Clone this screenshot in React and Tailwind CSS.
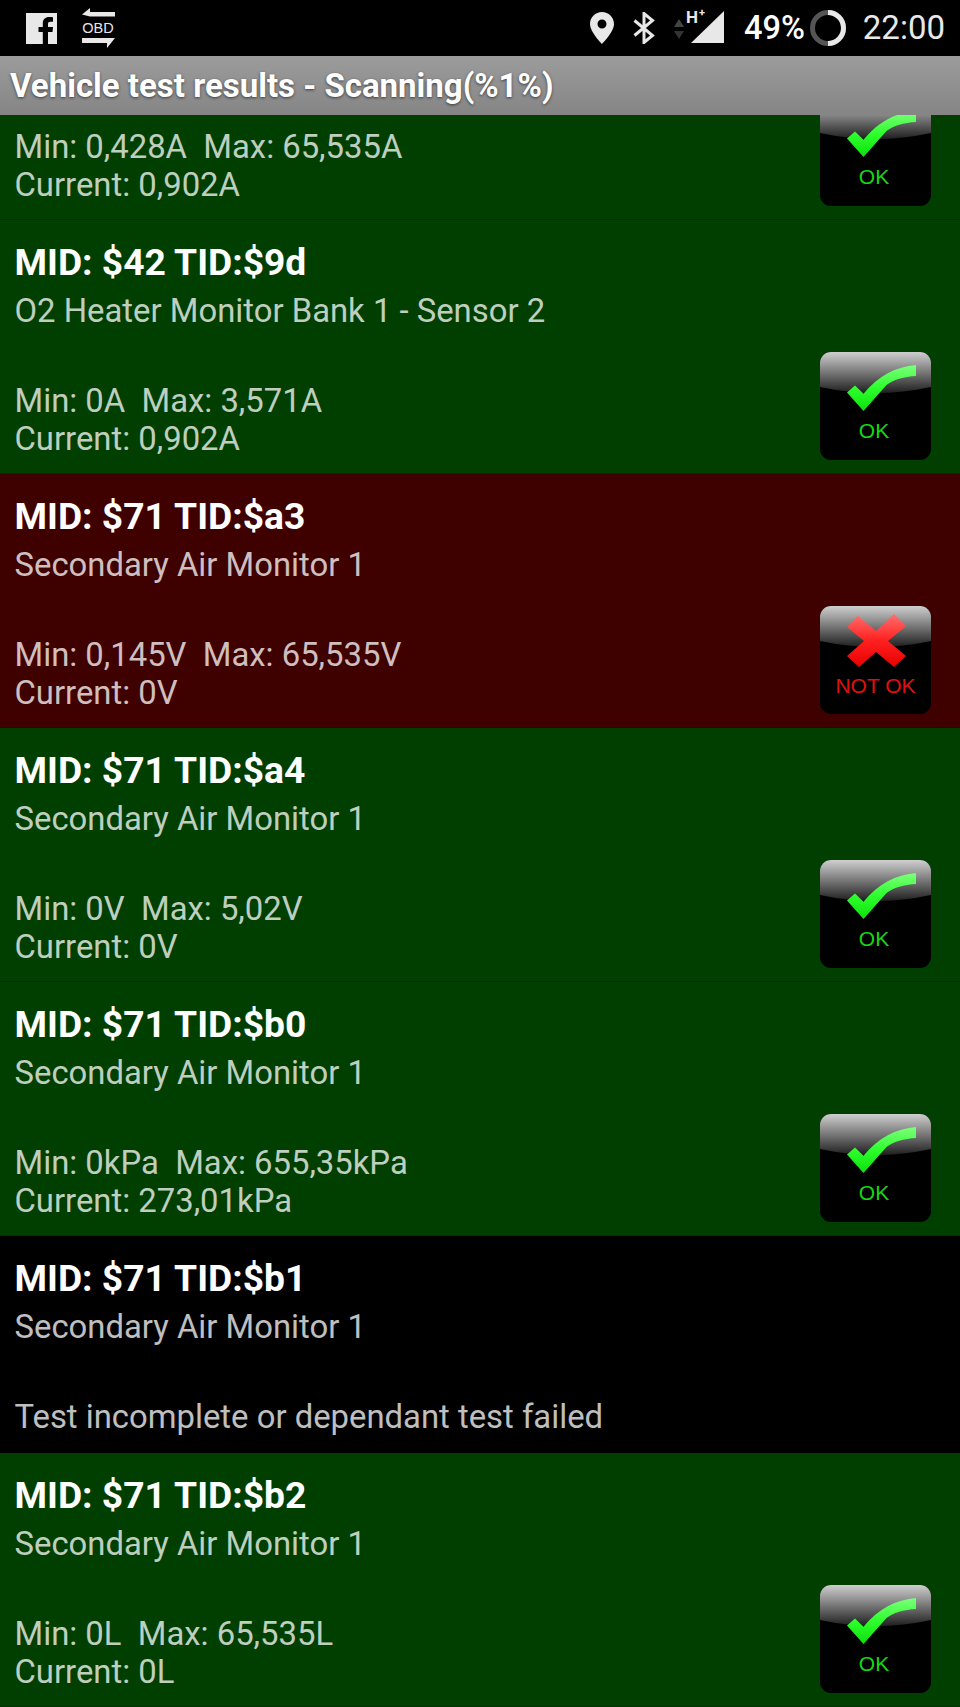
import React from "react";

function StatusLeft() {
  return (
    <div className="flex items-center gap-[24px] pl-[26px]">
      <svg width="31" height="31" viewBox="0 0 31 31">
        <path fill="#e8e8e8" d="M0 0H31V31H22V19H26.500L27 14H22V11C22 9.500 22.700 8.700 24.300 8.700H27V4.200C26 4.100 24.500 4 23.200 4C19.300 4 16.800 6.300 16.800 10.500V14H12.500V19H16.800V31H0Z" />
      </svg>
      <svg width="34" height="40" viewBox="0 0 34 40">
        <path fill="#e8e8e8" d="M1 6.500L9 0V4H34V8.500H9Z" />
        <text x="17" y="24.500" textAnchor="middle" fontSize="14.500" fontFamily="Liberation Sans, sans-serif" fill="#e8e8e8">OBD</text>
        <path fill="#e8e8e8" d="M1 30H34L26 40V35H1Z" />
      </svg>
    </div>
  );
}

function StatusRight() {
  return (
    <div className="flex items-center pr-[15px]">
      <svg width="24" height="32" viewBox="0 0 24 32" className="mr-[19px]">
        <path fill="#e8e8e8" fillRule="evenodd" d="M12 0C5.400 0 0 5.300 0 12C0 20 12 32 12 32S24 20 24 12C24 5.300 18.600 0 12 0ZM12 16.500A4.500 4.500 0 1 1 12 7.500A4.500 4.500 0 0 1 12 16.500Z" />
      </svg>
      <svg width="22" height="32" viewBox="0 0 22 32" className="mr-[18px]">
        <path fill="none" stroke="#e8e8e8" strokeWidth="3" d="M1.500 8.500L19.500 23.500L11 30.500V1.500L19.500 8.500L1.500 23.500" />
      </svg>
      <svg width="12" height="22" viewBox="0 0 12 22" className="mr-[6px] mt-[2px]">
        <path fill="#444" d="M6 1L11 9H1Z" />
        <path fill="#333" d="M1 13H11L6 21Z" />
      </svg>
      <div className="relative w-[33px] h-[33px] mr-[20px] mt-[-1px]">
        <svg width="33" height="33" viewBox="0 0 33 33">
          <path fill="#e8e8e8" d="M33 0V32H0Z" />
        </svg>
        <span className="absolute left-[-5px] top-[-4px] text-[17px] leading-[20px] font-bold text-[#e8e8e8] font-['Roboto',sans-serif]">H</span>
        <span className="absolute left-[8px] top-[-5px] text-[11px] leading-[14px] font-bold text-[#e8e8e8] font-['Roboto',sans-serif]">+</span>
      </div>
      <span className="text-[32.5px] leading-[36px] font-medium text-white font-['Roboto',sans-serif]">49%</span>
      <svg width="38" height="38" viewBox="0 0 38 38" className="ml-[4px] mr-[16px]">
        <circle cx="19" cy="19" r="15.500" fill="none" stroke="#555" strokeWidth="5" />
        <path fill="none" stroke="#e8e8e8" strokeWidth="5" d="M19 3.500A15.500 15.500 0 0 1 19 34.500" />
      </svg>
      <span className="text-[33px] leading-[36px] text-[#e8e8e8] font-['Roboto',sans-serif]">22:00</span>
    </div>
  );
}

function Gloss({ id }) {
  return (
    <>
      <defs>
        <linearGradient id={id} x1="0" y1="0" x2="0" y2="1">
          <stop offset="0" stopColor="#cfcfcf" />
          <stop offset="0.45" stopColor="#808080" />
          <stop offset="1" stopColor="#1f1f1f" />
        </linearGradient>
      </defs>
      <rect x="0" y="0" width="111" height="108" rx="11" fill="#000" />
      <path fill={`url(#${id})`} d="M0 35V11A11 11 0 0 1 11 0H100A11 11 0 0 1 111 11V35Q55.500 47 0 35Z" />
    </>
  );
}

function OkBadge({ id }) {
  return (
    <svg width="111" height="108" viewBox="0 0 111 108" className="shrink-0 block">
      <Gloss id={id} />
      <defs>
        <linearGradient id={`${id}c`} x1="0" y1="0" x2="0" y2="1">
          <stop offset="0" stopColor="#7dff7d" />
          <stop offset="0.5" stopColor="#2dff2d" />
          <stop offset="1" stopColor="#0ee00e" />
        </linearGradient>
      </defs>
      <path fill={`url(#${id}c)`} d="M96 13V24C84 24.500 73 28 66.500 33L43.500 59L27 40.500L35 33.500L43.500 41.700C58 24 76 14.500 96 13Z" />
      <text x="54" y="86" textAnchor="middle" fontSize="21" fontFamily="Liberation Sans, sans-serif" fill="#16d916">OK</text>
    </svg>
  );
}

function BadBadge({ id }) {
  return (
    <svg width="111" height="108" viewBox="0 0 111 108" className="shrink-0 block">
      <Gloss id={id} />
      <defs>
        <linearGradient id={`${id}c`} x1="0" y1="0" x2="0" y2="1">
          <stop offset="0" stopColor="#ff7070" />
          <stop offset="0.5" stopColor="#ff2020" />
          <stop offset="1" stopColor="#e80000" />
        </linearGradient>
      </defs>
      <path fill={`url(#${id}c)`} d="M38 10L56 25L74 8L86 20L68 35L86 50L74 61L56 46L39 61L27 50L44 35L27 21Z" />
      <text x="55.500" y="87" textAnchor="middle" fontSize="21" fontFamily="Liberation Sans, sans-serif" fill="#e01010">NOT OK</text>
    </svg>
  );
}

const bg = {
  ok: "bg-[#003f00]",
  bad: "bg-[#3f0000]",
  none: "bg-black",
};

function Row({ status, mid, name, min, cur, text, id }) {
  return (
    <div className={`flex shrink-0 border-b border-black/20 pl-[14.5px] pr-[29px] pt-[22px] ${status === "none" ? "h-[217px]" : "h-[254px]"} ${bg[status]}`}>
      <div className="flex-1 flex flex-col">
        <div className="text-[37.2px] leading-[40px] font-bold text-white">{mid}</div>
        <div className="mt-[10px] text-[32.85px] leading-[38px] text-white/75">{name}</div>
        {text ? (
          <div className="mt-[52px] text-[32.85px] leading-[38px] text-white/75">{text}</div>
        ) : (
          <div className="mt-[52px] text-[32.85px] leading-[38px] text-white/75">
            <div className="whitespace-pre">{min}</div>
            <div>{cur}</div>
          </div>
        )}
      </div>
      {status === "ok" && <div className="self-end mb-[13px]"><OkBadge id={id} /></div>}
      {status === "bad" && <div className="self-end mb-[13px]"><BadBadge id={id} /></div>}
    </div>
  );
}

export default function App() {
  return (
    <div className="w-[960px] h-[1707px] overflow-hidden flex flex-col bg-black font-['Roboto',sans-serif]">
      <div className="h-[56px] shrink-0 bg-black flex items-center justify-between">
        <StatusLeft />
        <StatusRight />
      </div>
      <div className="h-[59px] shrink-0 flex items-center pl-[10px] bg-gradient-to-b from-[#9c9c9c] to-[#858585]">
        <span className="text-[33px] leading-[36px] font-bold text-white [text-shadow:0_1px_3px_rgba(0,0,0,0.6)]">Vehicle test results - Scanning(%1%)</span>
      </div>
      <div className="flex-1 min-h-0 overflow-hidden flex flex-col">
        <div className="h-[105px] shrink-0 overflow-hidden flex justify-between items-end bg-[#003f00] border-b border-black/20 pl-[14.5px] pr-[29px]">
          <div className="self-start mt-[13px] text-[32.85px] leading-[38px] text-white/75">
            <div className="whitespace-pre">{"Min: 0,428A  Max: 65,535A"}</div>
            <div>Current: 0,902A</div>
          </div>
          <div className="mb-[13px]"><OkBadge id="b0" /></div>
        </div>
        <Row id="b1" status="ok" mid="MID: $42 TID:$9d" name="O2 Heater Monitor Bank 1 - Sensor 2" min="Min: 0A  Max: 3,571A" cur="Current: 0,902A" />
        <Row id="b2" status="bad" mid="MID: $71 TID:$a3" name="Secondary Air Monitor 1" min="Min: 0,145V  Max: 65,535V" cur="Current: 0V" />
        <Row id="b3" status="ok" mid="MID: $71 TID:$a4" name="Secondary Air Monitor 1" min="Min: 0V  Max: 5,02V" cur="Current: 0V" />
        <Row id="b4" status="ok" mid="MID: $71 TID:$b0" name="Secondary Air Monitor 1" min="Min: 0kPa  Max: 655,35kPa" cur="Current: 273,01kPa" />
        <Row id="b5" status="none" mid="MID: $71 TID:$b1" name="Secondary Air Monitor 1" text="Test incomplete or dependant test failed" />
        <Row id="b6" status="ok" mid="MID: $71 TID:$b2" name="Secondary Air Monitor 1" min="Min: 0L  Max: 65,535L" cur="Current: 0L" />
      </div>
    </div>
  );
}
